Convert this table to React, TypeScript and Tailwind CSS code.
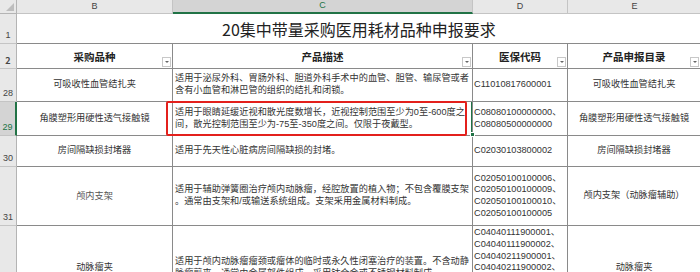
import React from "react";

type Row = {
  num: string;
  h: string;
  b: string;
  c: string[];
  d: string[];
  e: string;
  bSerif?: boolean;
  selected?: boolean;
};

const body = "font-['Liberation_Sans','Noto_Sans_CJK_SC',sans-serif]";

const rows: Row[] = [
  {
    num: "28",
    h: "h-[33px]",
    b: "可吸收性血管结扎夹",
    c: ["适用于泌尿外科、胃肠外科、胆道外科手术中的血管、胆管、输尿管或者", "含有小血管和淋巴管的组织的结扎和闭锁。"],
    d: ["C11010817600001"],
    e: "可吸收性血管结扎夹",
  },
  {
    num: "29",
    h: "h-[34px]",
    b: "角膜塑形用硬性透气接触镜",
    c: ["适用于眼睛延缓近视和散光度数增长，近视控制范围至少为0至-600度之", "间，散光控制范围至少为-75至-350度之间。仅限于夜戴型。"],
    d: ["C08080100000000、", "C08080500000000"],
    e: "角膜塑形用硬性透气接触镜",
    selected: true,
  },
  {
    num: "30",
    h: "h-[31px]",
    b: "房间隔缺损封堵器",
    c: ["适用于先天性心脏病房间隔缺损的封堵。"],
    d: ["C02030103800002"],
    e: "房间隔缺损封堵器",
  },
  {
    num: "31",
    h: "h-[59px]",
    b: "颅内支架",
    bSerif: true,
    c: ["适用于辅助弹簧圈治疗颅内动脉瘤，经腔放置的植入物；不包含覆膜支架", "。通常由支架和/或输送系统组成。支架采用金属材料制成。"],
    d: ["C02050100100006、", "C02050100100009、", "C02050100100010、", "C02050100100005"],
    e: "颅内支架（动脉瘤辅助）",
  },
  {
    num: "32",
    h: "h-[85px]",
    b: "动脉瘤夹",
    c: ["适用于颅内动脉瘤瘤颈或瘤体的临时或永久性闭塞治疗的装置。不含动静", "脉瘤剪夹。通常由金属部件组成，采用钛合金或不锈钢材料制成。"],
    d: [
      "C04040111900001、",
      "C04040111900002、",
      "C04040211900001、",
      "C04040211900002、",
      "C04040311900001、",
      "C04040311900002、",
      "C04040411900001",
    ],
    e: "动脉瘤夹",
  },
];

function FilterBtn() {
  return (
    <span className="absolute bottom-[1px] right-[1px] flex h-[10px] w-[9px] items-center justify-center border border-[#c8c8c8] bg-white">
      <span className="h-0 w-0 border-x-[2px] border-t-[2px] border-x-transparent border-t-[#666]" />
    </span>
  );
}

function RowHead({ n, h, active }: { n: string; h: string; active?: boolean }) {
  return (
    <div
      className={`flex w-[17px] shrink-0 items-end justify-center border-b border-[#c4c4c4] pb-[1px] text-[9px] ${h} ${
        active ? "border-r-2 border-r-[#217346] bg-[#d4d4d4] text-[#217346]" : "border-r border-r-[#b4b4b4] bg-[#e8e8e8] text-[#444]"
      }`}
    >
      {n}
    </div>
  );
}

export default function App() {
  return (
    <div className={`relative h-[272px] w-[700px] overflow-hidden bg-white ${body} text-[#222]`}>
      {/* column letters */}
      <div className="flex h-[14px] text-[9px] text-[#444]">
        <div className="relative w-[17px] shrink-0 border-r border-b border-[#b4b4b4] bg-[#e8e8e8]">
          <span className="absolute bottom-[2px] right-[2px] h-0 w-0 border-l-[8px] border-t-[8px] border-l-transparent border-t-transparent border-b-0 border-r-[8px] border-r-[#bdbdbd]" />
        </div>
        <div className="flex w-[156px] shrink-0 items-center justify-center border-r border-b border-[#c4c4c4] bg-[#e8e8e8]">B</div>
        <div className="flex w-[300px] shrink-0 items-center justify-center border-r border-[#c4c4c4] border-b-2 border-b-[#217346] bg-[#d4d4d4] text-[#217346]">C</div>
        <div className="flex w-[95px] shrink-0 items-center justify-center border-r border-b border-[#c4c4c4] bg-[#e8e8e8]">D</div>
        <div className="flex w-[133px] shrink-0 items-center justify-center border-b border-[#c4c4c4] bg-[#e8e8e8]">E</div>
      </div>

      {/* row 1: title */}
      <div className="flex h-[30px]">
        <RowHead n="1" h="h-[30px]" />
        <div className="flex w-[684px] shrink-0 items-center justify-center border-b border-[#8a8a8a] pt-[1px] font-['Noto_Sans_CJK_SC',sans-serif] text-[16px] text-[#222]">
          20集中带量采购医用耗材品种申报要求
        </div>
      </div>

      {/* row 2: headers */}
      <div className="flex h-[25px] font-['Noto_Sans_CJK_SC',sans-serif] text-[10.5px] font-bold text-[#222]">
        <RowHead n="2" h="h-[25px]" />
        <div className="relative flex w-[156px] shrink-0 items-center justify-center border-r border-b border-[#8a8a8a] pt-[2px]">
          采购品种
          <FilterBtn />
        </div>
        <div className="relative flex w-[300px] shrink-0 items-center justify-center border-r border-b border-[#8a8a8a] pt-[2px]">
          产品描述
          <FilterBtn />
        </div>
        <div className="relative flex w-[95px] shrink-0 items-center justify-center border-r border-b border-[#8a8a8a] pt-[2px]">
          医保代码
          <FilterBtn />
        </div>
        <div className="relative flex w-[133px] shrink-0 items-center justify-center border-r border-b border-[#8a8a8a] pt-[2px]">
          产品申报目录
          <FilterBtn />
        </div>
      </div>

      {rows.map((r) => (
        <div key={r.num} className={`flex ${r.h} text-[9.2px] leading-[11.6px] text-[#333]`}>
          <RowHead n={r.num} h={r.h} active={r.selected} />
          <div
            className={`flex w-[156px] shrink-0 items-center justify-center border-r border-b border-[#8a8a8a] ${
              r.bSerif ? "font-['Noto_Sans_CJK_SC',serif] text-[#555]" : ""
            }`}
          >
            {r.b}
          </div>
          <div className="relative flex w-[300px] shrink-0 flex-col justify-center overflow-hidden border-r border-b border-[#8a8a8a] pl-[2px] whitespace-nowrap">
            {r.c.map((l) => (
              <span key={l}>{l}</span>
            ))}
            {r.selected && (
              <span className="absolute -top-px right-[-1px] bottom-[-1px] w-[2px] bg-[#217346]" />
            )}
          </div>
          <div className="flex w-[95px] shrink-0 flex-col justify-center overflow-hidden border-r border-b border-[#8a8a8a] pl-[1px] whitespace-nowrap">
            {r.d.map((l) => (
              <span key={l}>{l}</span>
            ))}
          </div>
          <div className="flex w-[133px] shrink-0 items-center justify-center border-r border-b border-[#8a8a8a]">{r.e}</div>
        </div>
      ))}

      {/* fill handle of the selected cell */}
      <span className="absolute left-[470px] top-[132px] h-[5px] w-[5px] border border-white bg-[#217346]" />

      {/* red annotation box */}
      <div className="absolute left-[166px] top-[101px] h-[35px] w-[301px] rounded-[2px] border-2 border-[#e3201c]" />
    </div>
  );
}
